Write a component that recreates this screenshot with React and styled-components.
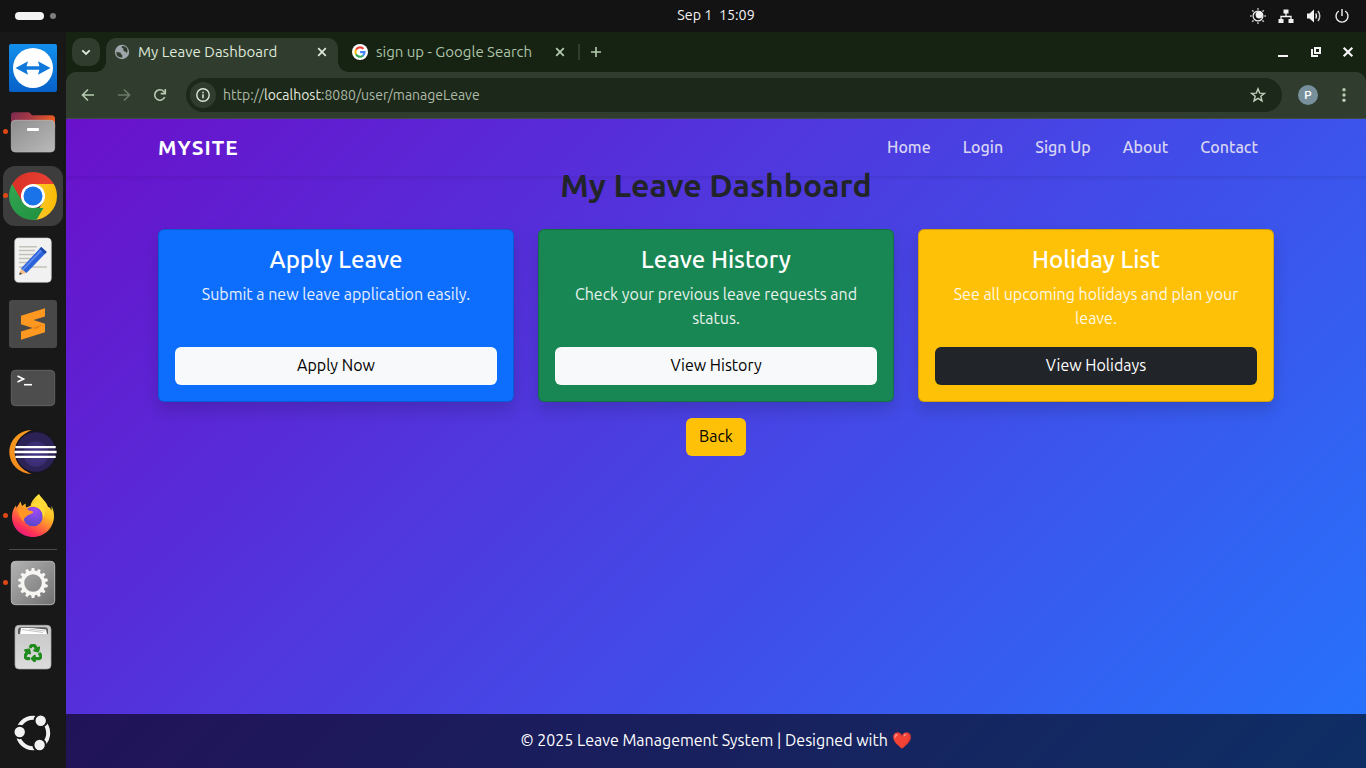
import React from "react";
import styled, { createGlobalStyle } from "styled-components";
import { FaRecycle } from "react-icons/fa";

const GlobalStyle = createGlobalStyle`
  * { box-sizing: border-box; }
  html, body { margin: 0; padding: 0; overflow: hidden; }
  body { font-family: Ubuntu, "Noto Sans", "Open Sans", sans-serif; background: #131313; }
  svg { display: block; flex: none; }
`;

/* ---------- desktop ---------- */

const Desktop = styled.div`
  width: 1366px;
  height: 768px;
  display: flex;
  flex-direction: column;
  overflow: hidden;
`;

const TopBar = styled.header`
  height: 32px;
  flex: none;
  display: grid;
  grid-template-columns: 1fr auto 1fr;
  align-items: center;
  padding: 0 16px 0 82px;
  background: #131313;
  color: #f2f2f2;
  font-size: 14.3px;
`;

const Workspaces = styled.div`
  display: flex;
  align-items: center;
  gap: 6px;
  margin-left: -67px;
`;

const WorkspacePill = styled.span`
  width: ${(p) => (p.$active ? 29 : 6)}px;
  height: ${(p) => (p.$active ? 8 : 6)}px;
  border-radius: 4px;
  background: ${(p) => (p.$active ? "#f4f4f4" : "#7f7f7f")};
`;

const Clock = styled.div`
  line-height: 20px;
  padding-bottom: 2px;
  white-space: pre;
`;

const Tray = styled.div`
  display: flex;
  justify-content: flex-end;
  gap: 12px;
`;

const Workarea = styled.div`
  flex: 1;
  display: flex;
  min-height: 0;
`;

const Dock = styled.nav`
  width: 66px;
  flex: none;
  display: flex;
  flex-direction: column;
  padding: 4px 0 3px;
  background: #181818;
`;

const DockItem = styled.div`
  position: relative;
  height: 64px;
  margin: 0 3px;
  display: flex;
  align-items: center;
  justify-content: center;
  &::before {
    content: "";
    display: ${(p) => (p.$focused ? "block" : "none")};
    position: absolute;
    inset: 2px 0;
    border-radius: 12px;
    background: #3d3d3d;
  }
  &::after {
    content: "";
    display: ${(p) => (p.$running ? "block" : "none")};
    position: absolute;
    left: 0;
    top: 29px;
    width: 5px;
    height: 5px;
    border-radius: 50%;
    background: #dd4814;
  }
  > svg { position: relative; }
`;

const DockRule = styled.div`
  height: 1px;
  margin: 1px 9px;
  background: #4b4b4b;
`;

const DockSpacer = styled.div`
  flex: 1;
`;

/* ---------- browser ---------- */

const Browser = styled.section`
  flex: 1;
  min-width: 0;
  display: flex;
  flex-direction: column;
  background: #162312;
`;

const TabStrip = styled.div`
  height: 40px;
  flex: none;
  display: flex;
  align-items: center;
  padding: 0 12px 0 6px;
  color: #b6cbb1;
`;

const TabMenu = styled.div`
  width: 28px;
  height: 28px;
  border-radius: 10px;
  background: #303d2e;
  display: grid;
  place-items: center;
`;

const Tab = styled.div`
  position: relative;
  width: 232px;
  height: 34px;
  align-self: flex-end;
  display: flex;
  align-items: center;
  padding: ${(p) => (p.$active ? "0 10px 6px 8px" : "0 4px 6px 14px")};
  gap: 8px;
  margin-left: ${(p) => (p.$active ? 6 : 0)}px;
  border-radius: 10px 10px 0 0;
  font-size: 15px;
  line-height: 20px;
  background: ${(p) => (p.$active ? "#303d2e" : "transparent")};
  color: ${(p) => (p.$active ? "#dfe8d9" : "#adc3a8")};
  &::before,
  &::after {
    content: "";
    display: ${(p) => (p.$active ? "block" : "none")};
    position: absolute;
    bottom: 0;
    width: 10px;
    height: 10px;
  }
  &::before {
    left: -10px;
    background: radial-gradient(circle at 0 0, transparent 9.5px, #303d2e 10px);
  }
  &::after {
    right: -10px;
    background: radial-gradient(circle at 100% 0, transparent 9.5px, #303d2e 10px);
  }
`;

const TabTitle = styled.span`
  flex: 1;
  height: 20px;
  white-space: nowrap;
`;

const TabDivider = styled.span`
  width: 2px;
  height: 16px;
  margin: 0 10px 0 8px;
  background: #303d2e;
`;

const WindowButtons = styled.div`
  margin-left: auto;
  display: flex;
  gap: 20.5px;
`;

const Toolbar = styled.div`
  height: 47px;
  flex: none;
  display: flex;
  align-items: center;
  padding: 0 14px 1px;
  border-radius: 10px 10px 0 0;
  border-bottom: 1px solid #434e42;
  background: #303d2e;
`;

const NavButtons = styled.div`
  width: 106px;
  display: flex;
  gap: 20px;
`;

const Omnibox = styled.div`
  width: 1096px;
  height: 34px;
  display: flex;
  align-items: center;
  padding: 0 16px 0 4px;
  border-radius: 17px;
  background: #1c2819;
  color: #adbaa8;
  font-size: 14px;
  line-height: 20px;
`;

const SiteInfo = styled.span`
  width: 26px;
  height: 26px;
  margin-right: 7px;
  border-radius: 50%;
  background: #303d2e;
  display: grid;
  place-items: center;
`;

const UrlHost = styled.span`
  color: #e3e9df;
`;

const UrlText = styled.span`
  flex: 1;
  white-space: nowrap;
`;

const Avatar = styled.span`
  width: 20px;
  height: 20px;
  margin: 0 18px 0 16px;
  border-radius: 50%;
  background: #78909c;
  color: #fff;
  font-family: Roboto, sans-serif;
  font-size: 11.5px;
  font-weight: 500;
  line-height: 20px;
  text-align: center;
`;

/* ---------- page ---------- */

const Page = styled.div`
  flex: 1;
  min-height: 0;
  display: flex;
  flex-direction: column;
  background: linear-gradient(135deg, #6a11cb, #2575fc);
  font-size: 16px;
  line-height: 24px;
`;

const Container = styled.div`
  width: 1140px;
  margin: 0 auto;
  padding: 0 12px;
`;

const SiteNav = styled.nav`
  height: 57px;
  flex: none;
  box-shadow: 0 2px 4px rgba(0, 0, 0, 0.08);
`;

const SiteNavRow = styled(Container)`
  height: 57px;
  display: flex;
  justify-content: space-between;
  align-items: center;
  padding-right: 28px;
`;

const Brand = styled.a`
  color: #fff;
  font-size: 20.8px;
  font-weight: 700;
  letter-spacing: 1px;
  line-height: 30px;
`;

const NavLinks = styled.div`
  display: flex;
  gap: 32px;
  padding-bottom: 2px;
  color: #d8d5f3;
  font-weight: 500;
`;

const Main = styled.main`
  flex: 1;
  margin-top: -9px;
`;

const MainInner = styled(Container)`
  display: flex;
  flex-direction: column;
  align-items: center;
`;

const PageTitle = styled.h2`
  margin: 0 0 24px;
  height: 38.4px;
  color: #212529;
  font-size: 32px;
  font-weight: 700;
  line-height: 36.6px;
`;

const CardGrid = styled.div`
  width: 100%;
  display: grid;
  grid-template-columns: repeat(3, 1fr);
  gap: 24px;
`;

const Card = styled.article`
  display: flex;
  flex-direction: column;
  align-items: center;
  padding: 16px;
  border: 1px solid rgba(0, 0, 0, 0.176);
  border-radius: 6px;
  background: ${(p) => p.$color};
  box-shadow: 0 8px 16px rgba(0, 0, 0, 0.15);
  color: #fff;
`;

const CardTitle = styled.h4`
  margin: 0 0 7px;
  font-size: 24px;
  font-weight: 500;
  line-height: 28.8px;
`;

const CardText = styled.p`
  width: 100%;
  height: 48px;
  margin: 0 0 17px;
  text-align: center;
  opacity: 0.9;
`;

const Button = styled.button`
  width: ${(p) => (p.$block ? "100%" : "60px")};
  height: 38px;
  padding: 0 0 2px;
  border: 0;
  border-radius: 6px;
  background: ${(p) => p.$bg};
  color: ${(p) => p.$fg};
  font: inherit;
  line-height: 24px;
`;

const BackRow = styled.div`
  margin-top: 16px;
  display: flex;
`;

const Footer = styled.footer`
  height: 54px;
  flex: none;
  display: flex;
  align-items: center;
  justify-content: center;
  padding-bottom: 2px;
  background: rgba(0, 0, 0, 0.6);
  color: #fff;
`;

/* ---------- dock icons ---------- */

const Art = ({ children }) => (
  <svg width="48" height="48" viewBox="0 0 48 48">{children}</svg>
);

const TeamViewerIcon = () => (
  <Art>
    <defs>
      <linearGradient id="tv" x1="0" y1="0" x2="0" y2="1">
        <stop offset="0" stopColor="#128fec" />
        <stop offset="1" stopColor="#0760c8" />
      </linearGradient>
    </defs>
    <rect width="48" height="48" rx="2" fill="url(#tv)" />
    <circle cx="24" cy="24" r="20" fill="#fff" />
    <path d="M6.500 24 19 17.200 17.600 22.200H30.400L29 17.200 41.500 24 29 30.800 30.400 25.800H17.600L19 30.800Z" fill="#0f78da" />
  </Art>
);

const FilesIcon = () => (
  <Art>
    <defs>
      <linearGradient id="fb" x1="0" y1="0" x2="1" y2="0.3">
        <stop offset="0" stopColor="#7a2a50" />
        <stop offset="0.5" stopColor="#a83a45" />
        <stop offset="1" stopColor="#ec5b22" />
      </linearGradient>
      <linearGradient id="ff" x1="0" y1="0" x2="1" y2="1">
        <stop offset="0" stopColor="#8d8d8d" />
        <stop offset="1" stopColor="#bababa" />
      </linearGradient>
    </defs>
    <path d="M2 20V7.500q0-3.200 3.200-3.200H19q1.500 0 2.500 1.200L23 7.200H42.500q3.500 0 3.500 3.500V20Z" fill="url(#fb)" />
    <rect x="2.300" y="12.300" width="43.400" height="31.700" rx="4" fill="url(#ff)" stroke="#b9b9b9" strokeWidth=".7" />
    <rect x="18" y="20" width="12" height="3" rx="1" fill="#fff" />
  </Art>
);

const ChromeIcon = () => (
  <Art>
    <defs>
      <clipPath id="cc"><circle cx="24" cy="24" r="24" /></clipPath>
      <linearGradient id="cr" x1="0" x2="1"><stop offset="0" stopColor="#d93025" /><stop offset="1" stopColor="#ea4335" /></linearGradient>
      <linearGradient id="cy" x1="0" x2="1"><stop offset="0" stopColor="#fcc934" /><stop offset="1" stopColor="#fbbc04" /></linearGradient>
      <linearGradient id="cg" x1="1" y1="1" x2="0" y2="0"><stop offset="0" stopColor="#1e8e3e" /><stop offset="1" stopColor="#34a853" /></linearGradient>
    </defs>
    <g clipPath="url(#cc)">
      <path d="M0 0H48V12H24L13.600 30 0 12Z" fill="url(#cr)" />
      <path d="M24 12H48V48H22L34.400 30Z" fill="url(#cy)" />
      <path d="M3.200 12 13.600 30 24 36H34.400L24 54H-6V12Z" fill="url(#cg)" />
    </g>
    <circle cx="24" cy="24" r="12" fill="#fff" />
    <circle cx="24" cy="24" r="9.500" fill="#1a73e8" />
  </Art>
);

const EditorIcon = () => (
  <Art>
    <rect x="5.700" y="2" width="36.600" height="44.300" rx="4" fill="#f1f1f1" stroke="#cfcfcf" strokeWidth=".6" />
    <path d="M10 10.800H28M10 14.500H26M10 18.500H26M10 22.500H22M10 26.500H20M10 31H38" stroke="#c4c2b8" strokeWidth="1.600" />
    <path d="M10.200 38.800 12 32.500 17.500 37Z" fill="#f2bd86" />
    <path d="M10.200 38.800 10.900 36.300 13.200 38Z" fill="#3b3b3b" />
    <path d="M12 32.500 32.200 11 37.700 16 17.500 37Z" fill="#2d63d8" />
    <path d="M13.700 33.900 34 12.600" stroke="#5e8cf0" strokeWidth="1.600" />
    <path d="M30.500 12.800 32.200 11 37.700 16 36 17.800Z" fill="#1d47a8" />
  </Art>
);

const SublimeIcon = () => (
  <Art>
    <rect width="48" height="48" rx="3" fill="#484848" />
    <path d="M12 15.700 36 8.300V16.500L24.500 20.100 36 23.700V32.200L12 39.800V31.500L23.600 27.900 12 24.300Z" fill="#ff9820" />
    <path d="M21 27.200 23.600 27.900 28 26.500 34 24.500 27 29Z" fill="#e37f12" />
  </Art>
);

const TerminalIcon = () => (
  <Art>
    <rect x="2.300" y="6.300" width="43.400" height="35.400" rx="4" fill="#4d4d4d" stroke="#696969" strokeWidth=".8" />
    <path d="M8.500 12 14.500 15 8.500 18" fill="none" stroke="#fff" strokeWidth="1.700" />
    <path d="M15 20.700H23" stroke="#fff" strokeWidth="1.600" />
  </Art>
);

const EclipseIcon = () => (
  <Art>
    <defs>
      <linearGradient id="eo" x1="0" y1="0" x2="0" y2="1"><stop offset="0" stopColor="#f79a1e" /><stop offset="1" stopColor="#f48a1c" /></linearGradient>
      <radialGradient id="ed" cx=".5" cy=".55" r=".5"><stop offset="0" stopColor="#473788" /><stop offset=".6" stopColor="#3b2d72" /><stop offset=".68" stopColor="#2c2255" /><stop offset="1" stopColor="#2c2255" /></radialGradient>
    </defs>
    <path d="M22.500 2A22.200 22 0 0 0 22.500 46Q8 40 8 24T22.500 2Z" fill="url(#eo)" />
    <circle cx="26.800" cy="24" r="21.200" fill="#171425" />
    <circle cx="26.800" cy="24" r="19.700" fill="url(#ed)" />
    <path d="M6.400 19.100H46.700M5.500 24H47.600M6.400 28.900H46.700" stroke="#fff" strokeWidth="2.400" />
  </Art>
);

const FirefoxIcon = () => (
  <Art>
    <defs>
      <linearGradient id="fx" x1=".8" y1=".05" x2=".25" y2="1">
        <stop offset="0" stopColor="#ffef45" />
        <stop offset=".35" stopColor="#ffbd22" />
        <stop offset=".6" stopColor="#ff7139" />
        <stop offset=".82" stopColor="#fb2f58" />
        <stop offset="1" stopColor="#e31587" />
      </linearGradient>
      <radialGradient id="fp" cx=".6" cy=".2" r=".9"><stop offset="0" stopColor="#a04cf5" /><stop offset="1" stopColor="#4f45c4" /></radialGradient>
    </defs>
    <path d="M30 2C32 6 38 10 39 15 41 15 42 17 42.200 19 43 17 42.500 14.500 42 13.500 44.500 17 45 21 45 25 44.500 36 35.500 45 24 45S3 36 3 25.500C3 20 4.500 16 7 13.500L7.500 16 11.500 9.500 13 14 16.500 11.500 17 15.500C20 14.500 20 14.200 21.500 14 22 9.500 26 5 30 2Z" fill="url(#fx)" />
    <circle cx="24" cy="24.500" r="9.800" fill="url(#fp)" />
    <path d="M8.500 17C12 15 17 15 20 18.500 23 19 24.500 19.200 24 20.800 22 22.500 19 22.500 17.500 24.500 15 25.500 14.500 28 15.500 30 11 27 9 21 8.500 17Z" fill="#ff9626" />
    <path d="M22 14C30 14 34.500 19 33.500 26 38 21 37 14 33 11 30 8 24 9.500 22 14Z" fill="#ffdb38" />
  </Art>
);

const GEAR_TEETH = Array.from({ length: 14 }, (_, i) => (i * 360) / 14);

const SettingsIcon = () => (
  <Art>
    <defs>
      <linearGradient id="sg" x1="0" y1="0" x2="1" y2="1"><stop offset="0" stopColor="#b3b3b3" /><stop offset=".5" stopColor="#929292" /><stop offset="1" stopColor="#6f6f6f" /></linearGradient>
    </defs>
    <rect x="2.300" y="2.300" width="43.400" height="43.400" rx="4" fill="url(#sg)" stroke="#bdbdbd" strokeWidth=".9" />
    <circle cx="24" cy="24" r="10.600" fill="none" stroke="#f6f5f2" strokeWidth="3.600" />
    {GEAR_TEETH.map((a) => (
      <path key={a} d="M22 13 22.700 9H25.300L26 13Z" fill="#f6f5f2" transform={`rotate(${a} 24 24)`} />
    ))}
  </Art>
);

const RecycleMark = styled(FaRecycle)`
  stroke: currentColor;
  stroke-width: 30;
  color: #1f8a1c;
`;

const TrashIcon = () => (
  <Art>
    <defs>
      <linearGradient id="tg" x1="0" y1="0" x2="0" y2="1"><stop offset="0" stopColor="#c6c6c6" /><stop offset="1" stopColor="#dcdcdc" /></linearGradient>
    </defs>
    <rect x="6" y="2.300" width="36" height="43.700" rx="4" fill="url(#tg)" stroke="#a9a9a9" strokeWidth=".7" />
    <path d="M9 11V7.500Q9 4.300 12 4.300H36Q39 4.300 39 7.500V11Z" fill="#5c5c5c" />
    <path d="M11 11 12 5H22L37 6.500 38 11Z" fill="#fff" />
    <path d="M13 6.500 34 9.500M20 6 36 8" stroke="#aaa" strokeWidth=".7" />
    <RecycleMark x="15" y="21" size={18} />
  </Art>
);

const UbuntuIcon = () => (
  <Art>
    <circle cx="24" cy="24" r="15.200" fill="none" stroke="#f2f2f2" strokeWidth="4" />
    <g fill="#f2f2f2" stroke="#181818" strokeWidth="2">
      <circle cx="31.700" cy="11.700" r="6.200" />
      <circle cx="10.700" cy="23" r="6.200" />
      <circle cx="30.600" cy="36" r="6.200" />
    </g>
  </Art>
);

const dockApps = [
  { name: "teamviewer", Icon: TeamViewerIcon },
  { name: "files", Icon: FilesIcon, running: true },
  { name: "chrome", Icon: ChromeIcon, running: true, focused: true },
  { name: "editor", Icon: EditorIcon },
  { name: "sublime", Icon: SublimeIcon },
  { name: "terminal", Icon: TerminalIcon },
  { name: "eclipse", Icon: EclipseIcon },
  { name: "firefox", Icon: FirefoxIcon, running: true },
];

/* ---------- tray and browser icons ---------- */

const Small = ({ children, size = 16, color = "#f2f2f2" }) => (
  <svg width={size} height={size} viewBox={`0 0 ${size} ${size}`} fill="none" stroke={color} strokeWidth="1.500">
    {children}
  </svg>
);

const NightLightIcon = () => (
  <Small>
    <circle cx="8" cy="8" r="4.900" strokeWidth="1.200" />
    <circle cx="9.200" cy="6.800" r="3.600" fill="#f2f2f2" stroke="none" />
    <path d="M8 0V1.800M8 14.200V16M0 8H1.800M14.200 8H16M2.200 2.200 3.600 3.600M12.400 12.400 13.800 13.800M2.200 13.800 3.600 12.400M12.400 3.600 13.800 2.200" stroke="#b5b5b5" />
  </Small>
);

const NetworkIcon = () => (
  <Small>
    <path d="M8 5V8.500M3 12V8.500H13V12" strokeWidth="1.300" />
    <path d="M5.500 1.500h5v4h-5zM.5 11h5v4h-5zM10.500 11h5v4h-5z" fill="#f2f2f2" stroke="none" />
  </Small>
);

const VolumeIcon = () => (
  <Small>
    <path d="M1 5.500H3.500L8 1.500V14.500L3.500 10.500H1Z" fill="#f2f2f2" stroke="none" />
    <path d="M9.800 5.500Q11.200 8 9.800 10.500" />
    <path d="M12 3Q15.500 8 12 13" stroke="#c8c8c8" />
  </Small>
);

const PowerIcon = () => (
  <Small>
    <path d="M8 1V8M4.800 3A6 6 0 1 0 11.200 3" strokeWidth="1.400" />
  </Small>
);

const ChevronIcon = () => (
  <Small color="#dfe8d9"><path d="M4.300 6.300 8 10 11.700 6.300" strokeWidth="1.900" /></Small>
);

const GlobeIcon = () => (
  <Small>
    <circle cx="8" cy="8" r="7.200" fill="#9fa5ab" stroke="none" />
    <path d="M2 7.500Q3 8.600 5 8.300 7.200 8.300 7 10.300 8.500 10.300 8.300 13.500 5 14 2.800 11.200ZM8 2Q7 4 9.500 4.600 8.500 6.800 10.500 7.500 12.500 7 12.500 9.500 14.500 7 13 4.300 11 1.800 8 2Z" fill="#303d2e" stroke="none" />
  </Small>
);

const GoogleIcon = () => (
  <svg width="16" height="16" viewBox="0 0 16 16" fill="none" strokeWidth="2.100">
    <circle cx="8" cy="8" r="8" fill="#fff" />
    <path d="M11.500 4.900A4.600 4.600 0 0 0 4 5.800" stroke="#ea4335" />
    <path d="M4 5.800A4.600 4.600 0 0 0 4 10.300" stroke="#fbbc05" />
    <path d="M4 10.300A4.600 4.600 0 0 0 11 11.600" stroke="#34a853" />
    <path d="M11 11.600A4.600 4.600 0 0 0 12.600 8.100H8.100" stroke="#4285f4" />
  </svg>
);

const CloseIcon = ({ color }) => (
  <Small size={12} color={color}><path d="M2.200 2.200 9.800 9.800M9.800 2.200 2.200 9.800" strokeWidth="1.700" /></Small>
);

const PlusIcon = () => (
  <Small size={12} color="#b6cbb1"><path d="M6 1V11M1 6H11" strokeWidth="1.600" /></Small>
);

const MinimizeIcon = () => (
  <Small size={12} color="#f4f4f4"><path d="M1 10H11" strokeWidth="2" /></Small>
);

const RestoreIcon = () => (
  <Small size={12} color="#f4f4f4">
    <path d="M5 2H10V7H5Z" strokeWidth="2" />
    <path d="M2 3V10H8" strokeWidth="2" />
  </Small>
);

const WindowCloseIcon = () => (
  <Small size={12} color="#f4f4f4"><path d="M1.700 1.700 10.300 10.300M10.300 1.700 1.700 10.300" strokeWidth="2.200" /></Small>
);

const BackIcon = () => (
  <Small color="#b6cbb1"><path d="M14 8H2.700M8 2.500 2.500 8 8 13.500" strokeWidth="1.600" /></Small>
);

const ForwardIcon = () => (
  <Small color="#6b7b68"><path d="M2 8H13.300M8 2.500 13.500 8 8 13.500" strokeWidth="1.600" /></Small>
);

const ReloadIcon = () => (
  <Small color="#b6cbb1">
    <path d="M12.700 10A5.200 5.200 0 1 1 11.800 4.500L13 6" strokeWidth="1.600" />
    <path d="M13.300 2V6.600H8.700" strokeWidth="1.600" />
  </Small>
);

const InfoIcon = () => (
  <Small color="#dfe8d9">
    <circle cx="8" cy="8" r="6.200" strokeWidth="1.400" />
    <path d="M8 7.300V11.200M8 4.700V6.200" strokeWidth="1.500" />
  </Small>
);

const StarIcon = () => (
  <Small color="#c3d0be">
    <path d="M8 1.800 9.700 6.100 14.300 6.400 10.800 9.300 12 13.900 8 11.400 4 13.900 5.200 9.300 1.700 6.400 6.300 6.100Z" strokeWidth="1.400" />
  </Small>
);

const MenuDotsIcon = () => (
  <Small color="none">
    <g fill="#b6cbb1"><circle cx="8" cy="2.700" r="1.700" /><circle cx="8" cy="8" r="1.700" /><circle cx="8" cy="13.300" r="1.700" /></g>
  </Small>
);

/* ---------- content ---------- */

const navLinks = ["Home", "Login", "Sign Up", "About", "Contact"];

const cards = [
  {
    color: "#0d6efd",
    title: "Apply Leave",
    text: "Submit a new leave application easily.",
    action: "Apply Now",
    bg: "#f8f9fa",
    fg: "#000",
  },
  {
    color: "#198754",
    title: "Leave History",
    text: "Check your previous leave requests and status.",
    action: "View History",
    bg: "#f8f9fa",
    fg: "#000",
  },
  {
    color: "#ffc107",
    title: "Holiday List",
    text: "See all upcoming holidays and plan your leave.",
    action: "View Holidays",
    bg: "#212529",
    fg: "#fff",
  },
];

export default function App() {
  return (
    <Desktop>
      <GlobalStyle />
      <TopBar>
        <Workspaces><WorkspacePill $active /><WorkspacePill /></Workspaces>
        <Clock>{"Sep 1  15:09"}</Clock>
        <Tray><NightLightIcon /><NetworkIcon /><VolumeIcon /><PowerIcon /></Tray>
      </TopBar>
      <Workarea>
        <Dock>
          {dockApps.map(({ name, Icon, running, focused }) => (
            <DockItem key={name} $running={running} $focused={focused}><Icon /></DockItem>
          ))}
          <DockRule />
          <DockItem $running><SettingsIcon /></DockItem>
          <DockItem><TrashIcon /></DockItem>
          <DockSpacer />
          <DockItem><UbuntuIcon /></DockItem>
        </Dock>
        <Browser>
          <TabStrip>
            <TabMenu><ChevronIcon /></TabMenu>
            <Tab $active>
              <GlobeIcon />
              <TabTitle>My Leave Dashboard</TabTitle>
              <CloseIcon color="#dfe8d9" />
            </Tab>
            <Tab>
              <GoogleIcon />
              <TabTitle>sign up - Google Search</TabTitle>
              <CloseIcon color="#b6cbb1" />
            </Tab>
            <TabDivider />
            <PlusIcon />
            <WindowButtons><MinimizeIcon /><RestoreIcon /><WindowCloseIcon /></WindowButtons>
          </TabStrip>
          <Toolbar>
            <NavButtons><BackIcon /><ForwardIcon /><ReloadIcon /></NavButtons>
            <Omnibox>
              <SiteInfo><InfoIcon /></SiteInfo>
              <UrlText>http://<UrlHost>localhost</UrlHost>:8080/user/manageLeave</UrlText>
              <StarIcon />
            </Omnibox>
            <Avatar>P</Avatar>
            <MenuDotsIcon />
          </Toolbar>
          <Page>
            <SiteNav>
              <SiteNavRow>
                <Brand>MYSITE</Brand>
                <NavLinks>
                  {navLinks.map((label) => <span key={label}>{label}</span>)}
                </NavLinks>
              </SiteNavRow>
            </SiteNav>
            <Main>
              <MainInner>
                <PageTitle>My Leave Dashboard</PageTitle>
                <CardGrid>
                  {cards.map((c) => (
                    <Card key={c.title} $color={c.color}>
                      <CardTitle>{c.title}</CardTitle>
                      <CardText>{c.text}</CardText>
                      <Button $block $bg={c.bg} $fg={c.fg}>{c.action}</Button>
                    </Card>
                  ))}
                </CardGrid>
                <BackRow>
                  <Button $bg="#ffc107" $fg="#000">Back</Button>
                </BackRow>
              </MainInner>
            </Main>
            <Footer>© 2025 Leave Management System | Designed with ❤️</Footer>
          </Page>
        </Browser>
      </Workarea>
    </Desktop>
  );
}
